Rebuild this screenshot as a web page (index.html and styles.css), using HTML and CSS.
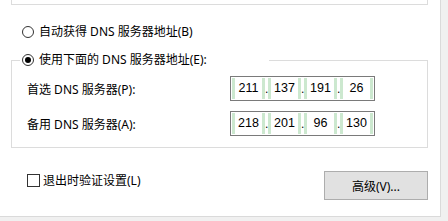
FILE: index.html
```html
<!DOCTYPE html>
<html lang="zh-CN">
<head>
    <meta charset="UTF-8">
    <meta name="viewport" content="width=device-width, initial-scale=1.0">
    <title>DNS 设置</title>
    <link rel="stylesheet" href="styles.css">
</head>
<body>
    <div class="pagina">
        <div class="grupo-anterior"></div>

        <label class="opcion">
            <span class="radio"></span>
            <span>自动获得 DNS 服务器地址(B)</span>
        </label>

        <div class="grupo-dns">
            <label class="opcion titulo-grupo">
                <span class="radio marcado"></span>
                <span>使用下面的 DNS 服务器地址(E):</span>
            </label>

            <div class="fila">
                <span class="etiqueta">首选 DNS 服务器(P):</span>
                <div class="ip">
                    <span class="campo">211</span><span class="punto">.</span>
                    <span class="campo">137</span><span class="punto">.</span>
                    <span class="campo">191</span><span class="punto">.</span>
                    <span class="campo">26</span>
                </div>
            </div>

            <div class="fila">
                <span class="etiqueta">备用 DNS 服务器(A):</span>
                <div class="ip">
                    <span class="campo">218</span><span class="punto">.</span>
                    <span class="campo">201</span><span class="punto">.</span>
                    <span class="campo">96</span><span class="punto">.</span>
                    <span class="campo">130</span>
                </div>
            </div>
        </div>

        <div class="pie">
            <label class="opcion casilla-fila">
                <span class="casilla"></span>
                <span>退出时验证设置(L)</span>
            </label>
            <button class="boton">高级(V)...</button>
        </div>
    </div>
</body>
</html>
```

FILE: styles.css
```css
/* ---------------- base ---------------- */
body {
    margin: 0;
    background-color: #f0f0f0;
    font-family: "Noto Sans", "Noto Sans CJK SC", sans-serif;
    font-size: 12px;
    color: #000;
}

.pagina {
    box-sizing: border-box;
    width: 441px;
    height: 217px;
    background-color: #fff;
    border-right: 1px solid #dadada;
    border-bottom: 1px solid #dadada;
}

/* bottom edge of the group above (scrolled out) */
.grupo-anterior {
    box-sizing: border-box;
    width: 417px;
    height: 5px;
    margin-left: 11px;
    border: 1px solid #dcdcdc;
    border-top: none;
}

/* ---------------- radios / checkbox ---------------- */
.opcion {
    display: flex;
    align-items: center;
    gap: 5px;
    line-height: 16px;
    margin: 19px 0 0 22px;
}

.radio {
    box-sizing: border-box;
    width: 12px;
    height: 12px;
    border: 1px solid #333;
    border-radius: 50%;
    background-color: #fff;
    position: relative;
    flex-shrink: 0;
}

.radio.marcado::after {
    content: "";
    position: absolute;
    left: 2px;
    top: 2px;
    width: 6px;
    height: 6px;
    border-radius: 50%;
    background-color: #000;
}

/* ---------------- group box ---------------- */
.grupo-dns {
    position: relative;
    box-sizing: border-box;
    width: 417px;
    height: 88px;
    margin: 20px 0 0 11px;
    padding: 15px 12px 0 15px;
    border: 1px solid #dcdcdc;
}

/* caption sits on the top border, like a windows group box */
.titulo-grupo {
    position: absolute;
    top: -9px;
    left: 8px;
    width: 249px;
    box-sizing: border-box;
    margin: 0;
    padding-left: 2px;
    background-color: #fff;
}

.fila {
    display: flex;
    align-items: center;
    height: 25px;
}

.fila + .fila {
    margin-top: 10px;
}

.etiqueta {
    width: 203px;
}

/* ---------------- ip field ---------------- */
.ip {
    box-sizing: border-box;
    display: flex;
    width: 145px;
    height: 25px;
    padding: 1px;
    border: 1px solid #7a7a7a;
    background-color: #fff;
}

.campo {
    box-sizing: border-box;
    width: 33px;
    height: 21px;
    border-left: 3px solid #cce8cf;
    border-right: 3px solid #cce8cf;
    text-align: center;
    line-height: 21px;
    font-family: "Liberation Sans", sans-serif;
    font-size: 12.5px;
}

.punto {
    width: 3px;
    line-height: 23px;
    text-align: center;
    font-family: "Liberation Sans", sans-serif;
}

/* ---------------- footer ---------------- */
.pie {
    display: flex;
    justify-content: space-between;
    align-items: flex-start;
    margin: 23px 12px 0 27px;
}

.casilla-fila {
    margin: 3px 0 0 0;
    gap: 3px;
    line-height: 13px;
}

.casilla {
    box-sizing: border-box;
    width: 13px;
    height: 13px;
    border: 1px solid #333;
    background-color: #fff;
}

.boton {
    box-sizing: border-box;
    width: 104px;
    height: 29px;
    border: 1px solid #adadad;
    background-color: #e1e1e1;
    font-family: inherit;
    font-size: 12px;
    color: #000;
    padding: 0;
}
```
